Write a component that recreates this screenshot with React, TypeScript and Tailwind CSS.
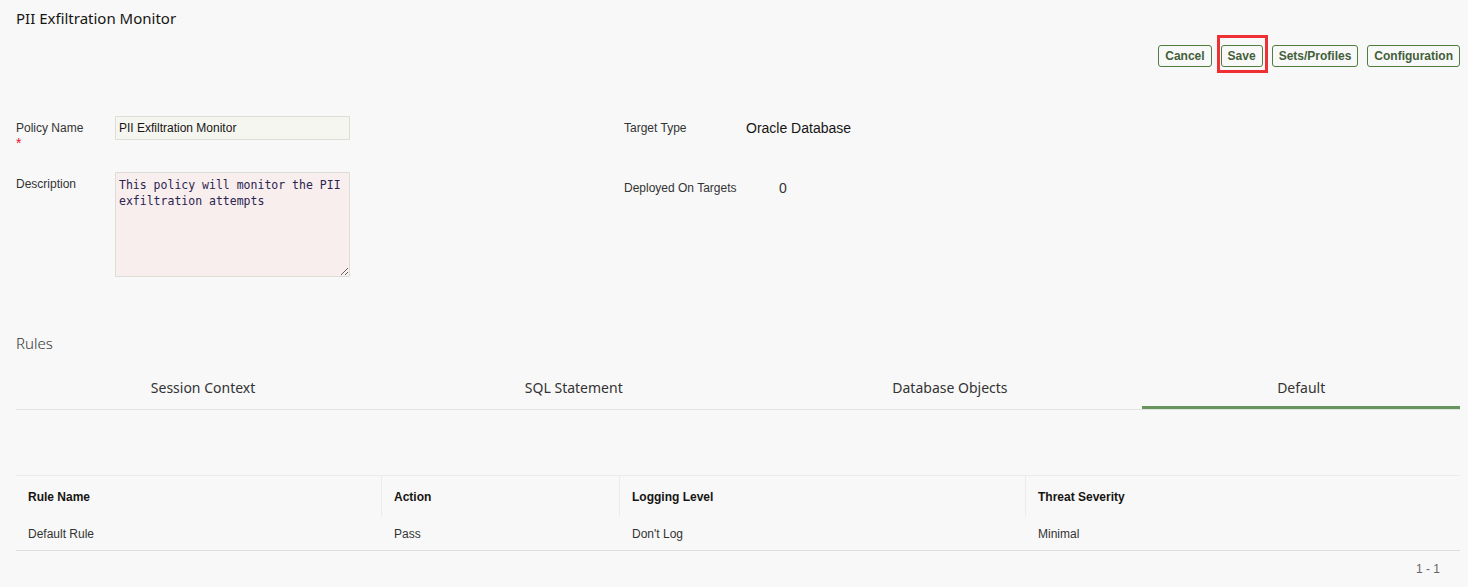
import React from 'react';

const tabs = ['Session Context', 'SQL Statement', 'Database Objects', 'Default'];
const activeTab = 'Default';

const columns = [
  { title: 'Rule Name', width: 'w-[365px]' },
  { title: 'Action', width: 'w-[238px]' },
  { title: 'Logging Level', width: 'w-[406px]' },
  { title: 'Threat Severity', width: 'flex-1' },
];

const rows = [['Default Rule', 'Pass', "Don't Log", 'Minimal']];

function ActionButton({ label, highlighted }: { label: string; highlighted?: boolean }) {
  return (
    <span className="relative inline-flex">
      <button
        type="button"
        className="h-[22px] rounded-[3px] border border-[#4f7d3f] bg-[#f8f8f8] px-[6px] text-[12px] font-bold leading-none text-[#435f3a]"
      >
        {label}
      </button>
      {highlighted && (
        <span className="pointer-events-none absolute -top-[10px] -bottom-[6px] -left-[4px] -right-[5px] border-[3px] border-[#ee2f33]" />
      )}
    </span>
  );
}

export default function App() {
  return (
    <main className="min-h-screen bg-[#f8f8f8] pl-4 pr-2 font-['Liberation_Sans',Arial,sans-serif] text-[#333]">
      <h1 className="pt-[7px] font-['Noto_Sans',sans-serif] text-[15px] leading-[22px] text-[#161513]">
        PII Exfiltration Monitor
      </h1>

      <div className="mt-[16px] flex justify-end gap-[9px]">
        <ActionButton label="Cancel" />
        <ActionButton label="Save" highlighted />
        <ActionButton label="Sets/Profiles" />
        <ActionButton label="Configuration" />
      </div>

      <section className="mt-[49px] flex">
        <div className="w-[608px]">
          <div className="flex">
            <div className="w-[99px] pt-[4px] text-[12px] leading-4">
              <div>Policy Name</div>
              <div className="text-[14px] leading-[14px] text-[#e8112d]">*</div>
            </div>
            <input
              readOnly
              value="PII Exfiltration Monitor"
              className="h-[24px] w-[235px] rounded-[1px] border border-[#dddcd5] bg-[#f6f6f1] px-[3px] text-[12px] text-[#161513] outline-none"
            />
          </div>
          <div className="mt-[22px] flex">
            <div className="w-[99px] pt-[4px] text-[12px] leading-4">Description</div>
            <textarea
              readOnly
              value="This policy will monitor the PII exfiltration attempts"
              className="h-[105px] w-[235px] rounded-[1px] border border-[#dddcd5] bg-[#f8eeee] px-[3px] pt-[4px] font-['DejaVu_Sans_Mono',monospace] text-[11.5px] leading-4 text-[#2b2450] outline-none"
            />
          </div>
        </div>

        <div className="flex-1">
          <div className="flex items-center pt-[3px]">
            <div className="w-[122px] text-[12px] leading-4">Target Type</div>
            <div className="text-[14px] leading-[18px] text-[#161513]">Oracle Database</div>
          </div>
          <div className="mt-[42px] flex items-center">
            <div className="w-[155px] text-[12px] leading-4">Deployed On Targets</div>
            <div className="text-[14px] leading-[18px]">0</div>
          </div>
        </div>
      </section>

      <h2 className="mt-[55px] font-['Noto_Sans',sans-serif] text-[15px] font-light leading-[22px] text-[#333]">
        Rules
      </h2>

      <div className="mt-[15px] flex border-b border-[#e3e3e3]">
        {tabs.map((tab) => (
          <div
            key={tab}
            className={
              tab === activeTab
                ? 'flex h-[40px] flex-auto items-center justify-center border-b-[3px] border-[#67955d] font-["Noto_Sans",sans-serif] text-[14px] text-[#333]'
                : 'flex h-[40px] flex-auto items-center justify-center border-b-[3px] border-transparent font-["Noto_Sans",sans-serif] text-[14px] text-[#333]'
            }
          >
            {tab}
          </div>
        ))}
      </div>

      <div className="mt-[65px] border-t border-[#ececec]">
        <div className="flex h-[41px]">
          {columns.map((col, i) => (
            <div
              key={col.title}
              className={`${col.width} flex items-center px-3 text-[12px] font-bold text-[#161513] ${
                i > 0 ? 'border-l border-[#ececec]' : ''
              }`}
            >
              {col.title}
            </div>
          ))}
        </div>
        {rows.map((row) => (
          <div key={row[0]} className="flex h-[34px] border-b border-[#dedede]">
            {row.map((cell, i) => (
              <div
                key={i}
                className={`${columns[i].width} flex items-center px-3 text-[12px] text-[#333] ${
                  i > 0 ? 'border-l border-transparent' : ''
                }`}
              >
                {cell}
              </div>
            ))}
          </div>
        ))}
        <div className="flex justify-end pr-[20px] pt-[10px] text-[12px] leading-4 text-[#666]">1 - 1</div>
      </div>
    </main>
  );
}
